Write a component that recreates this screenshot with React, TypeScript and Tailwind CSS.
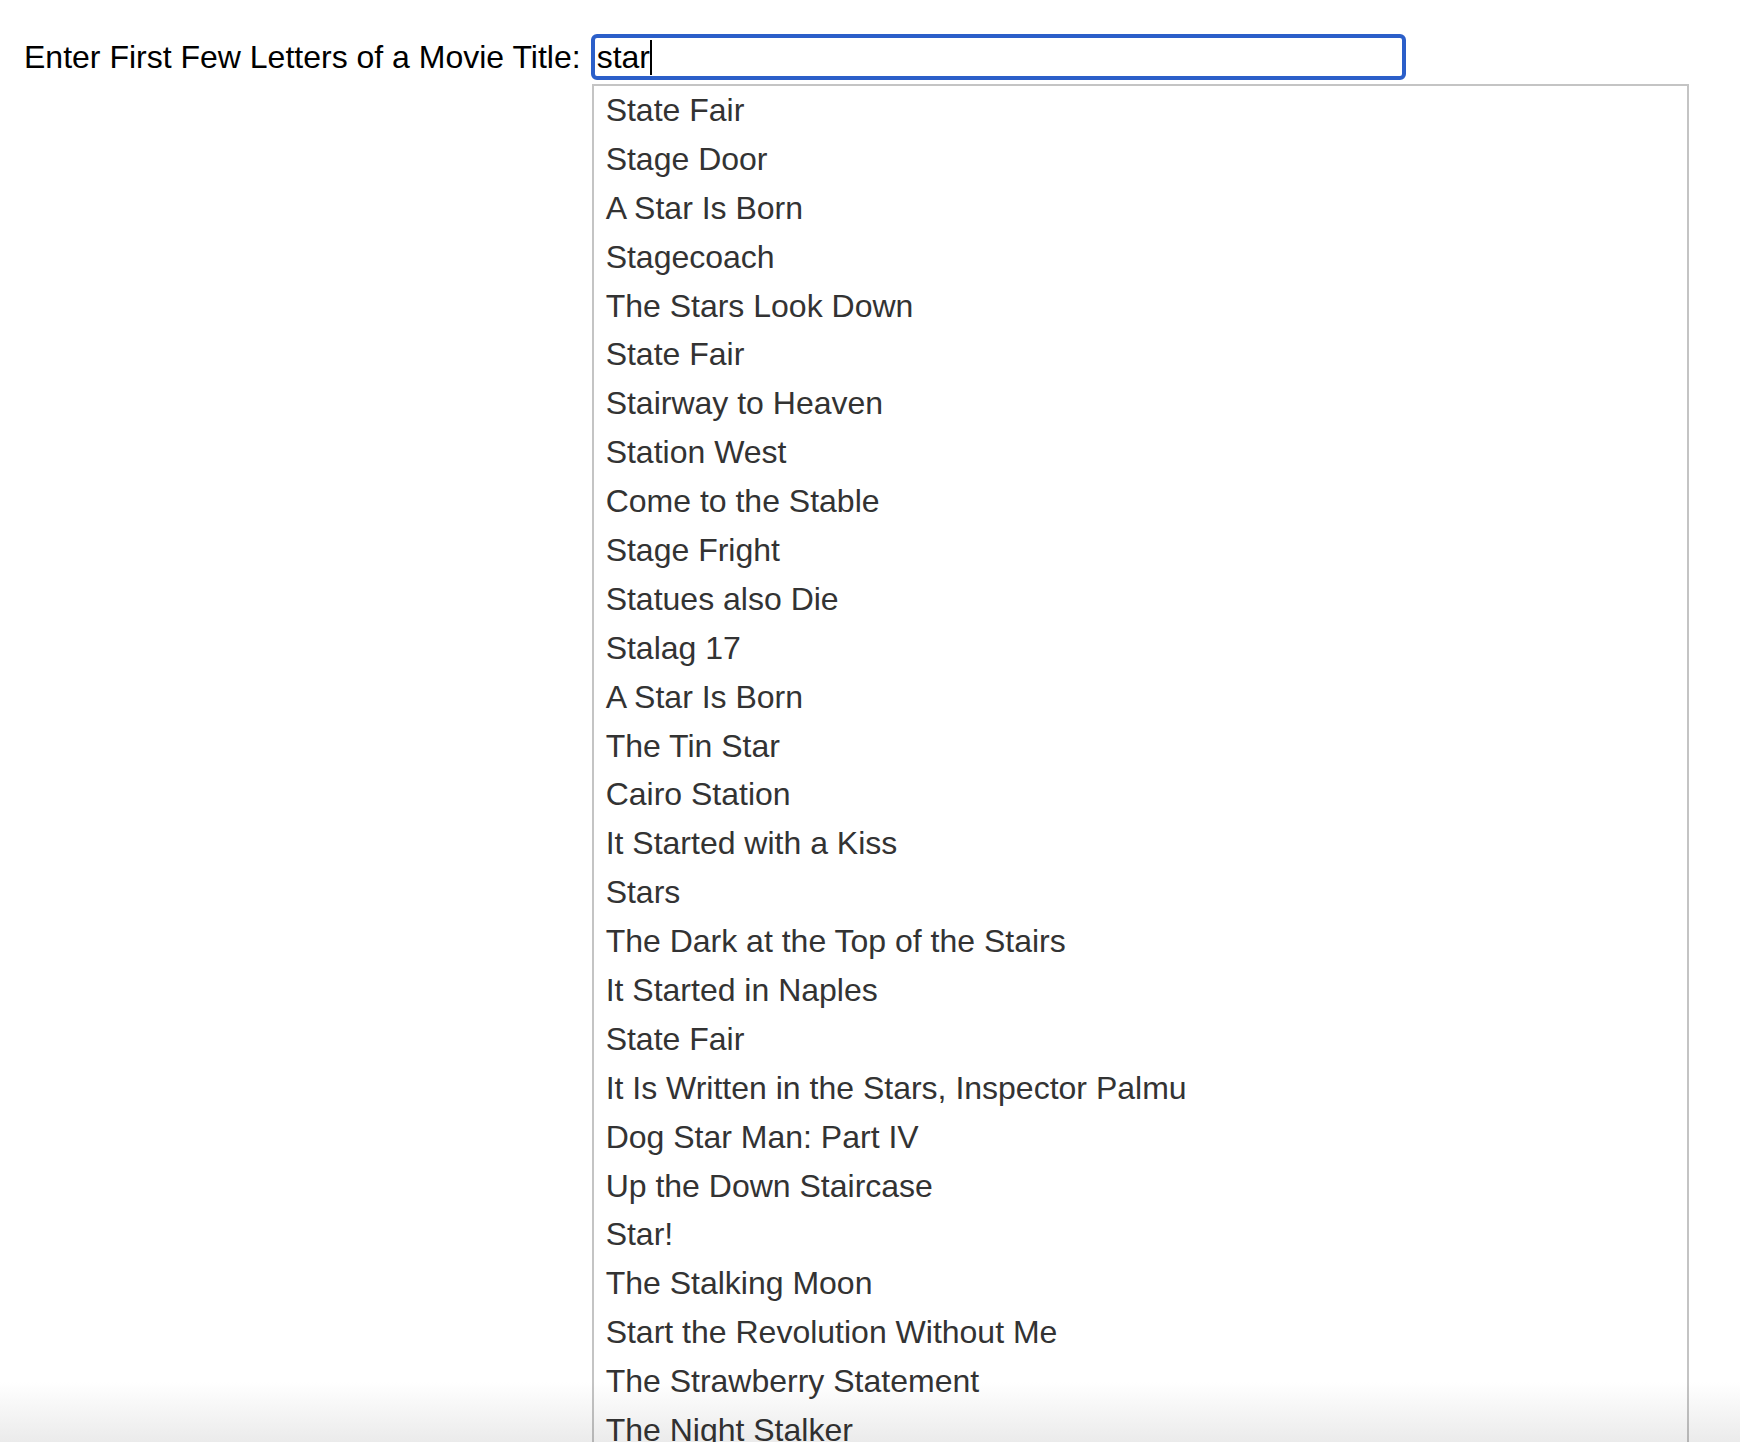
import { useState } from 'react';

const titles = [
  'State Fair',
  'Stage Door',
  'A Star Is Born',
  'Stagecoach',
  'The Stars Look Down',
  'State Fair',
  'Stairway to Heaven',
  'Station West',
  'Come to the Stable',
  'Stage Fright',
  'Statues also Die',
  'Stalag 17',
  'A Star Is Born',
  'The Tin Star',
  'Cairo Station',
  'It Started with a Kiss',
  'Stars',
  'The Dark at the Top of the Stairs',
  'It Started in Naples',
  'State Fair',
  'It Is Written in the Stars, Inspector Palmu',
  'Dog Star Man: Part IV',
  'Up the Down Staircase',
  'Star!',
  'The Stalking Moon',
  'Start the Revolution Without Me',
  'The Strawberry Statement',
  'The Night Stalker',
  'Star Wars',
  'Stardust Memories',
];

export default function App() {
  const [query, setQuery] = useState('star');

  return (
    <div className="relative h-[1442px] overflow-hidden bg-white font-['Liberation_Sans',Arial,sans-serif]">
      <div className="flex items-center pl-[24px] pt-[34px]">
        <label htmlFor="movie" className="text-[32px] leading-[46px] text-black">
          Enter First Few Letters of a Movie Title:
        </label>
        <div className="relative ml-[10px]">
          <input
            id="movie"
            autoFocus
            value={query}
            onChange={(e) => setQuery(e.target.value)}
            className="block h-[46px] w-[815px] rounded-[6px] border-[4px] border-[#2b5fc9] px-[2px] text-[32px] text-black caret-black outline-none"
          />
          {/* text caret */}
          <span className="pointer-events-none absolute left-[59px] top-[6px] h-[35px] w-[2px] bg-black" />
          <ul className="absolute left-[1px] top-[50px] w-[1097px] border-x-2 border-t-2 border-[#c4c4c4] bg-white">
            {titles.map((t, i) => (
              <li key={i} className="h-[48.9px] pl-[12px] text-[32px] leading-[48.9px] text-[#333333]">
                {t}
              </li>
            ))}
          </ul>
        </div>
      </div>
      <div className="pointer-events-none absolute inset-x-0 bottom-0 h-[60px] bg-linear-to-b from-white to-[#ebebeb] mix-blend-multiply" />
    </div>
  );
}
